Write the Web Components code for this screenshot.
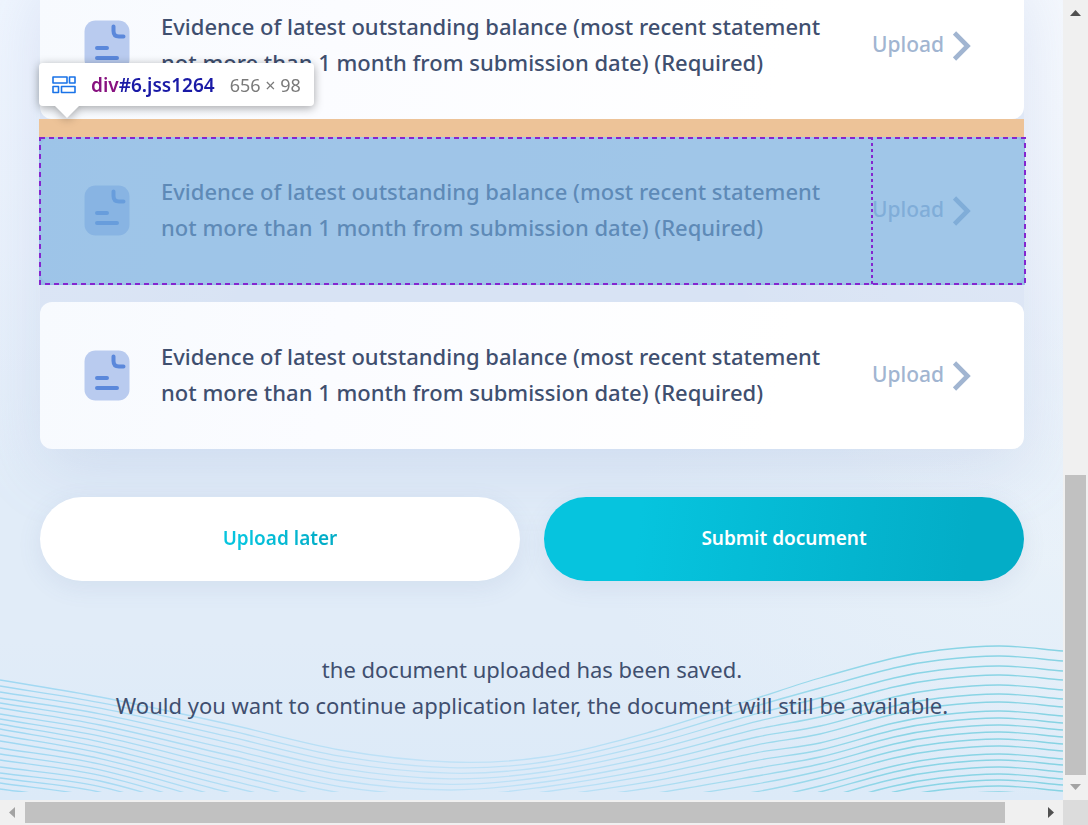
<!DOCTYPE html>
<html lang="en">
<head>
<meta charset="utf-8">
<meta name="viewport" content="width=device-width, initial-scale=1">
<title>Upload documents</title>
<style>
  html, body { margin: 0; height: 100%; }
  body { overflow: hidden; font-family: "Noto Sans", "Open Sans", sans-serif; color: #3f4f6f; }
</style>
</head>
<body>
<scroll-frame>
  <upload-page></upload-page>
</scroll-frame>

<script>
class BaseElement extends HTMLElement {
  connectedCallback() {
    if (this.shadowRoot) return;
    this.attachShadow({ mode: 'open' }).innerHTML = this.render();
    this.ready();
  }
  ready() {}
}

/* Viewport with classic scroll bars along the right and bottom edges */
customElements.define('scroll-frame', class extends BaseElement {
  render() {
    return `
    <style>
      :host { display: grid; grid-template: minmax(0, 1fr) 25px / minmax(0, 1fr) 25px; height: 100vh; background: #dcdcdc; }
      main { overflow: hidden; min-height: 0; }
    </style>
    <main><slot></slot></main>
    <scroll-bar axis="y" before="450" size="300" after="0"></scroll-bar>
    <scroll-bar axis="x" before="0" size="980" after="33"></scroll-bar>`;
  }
});

customElements.define('scroll-bar', class extends BaseElement {
  render() {
    const y = this.getAttribute('axis') === 'y';
    const a = n => this.getAttribute(n);
    const start = y ? 'M7 16 12.500 10 18 16Z' : 'M15 7 9 12.500 15 18Z';
    const end = y ? 'M7 9 18 9 12.500 15Z' : 'M10 7 16 12.500 10 18Z';
    return `
    <style>
      :host { display: flex; flex-direction: ${y ? 'column' : 'row'}; background: #f0f0f0; }
      svg { width: 25px; height: 25px; flex: none; }
      .before { flex: ${a('before')} 1 0; }
      .thumb { flex: ${a('size')} 1 0; background: #c1c1c1; margin: ${y ? '0 2px' : '2px 0'}; }
      .after { flex: ${a('after')} 1 0; }
    </style>
    <svg viewBox="0 0 25 25" aria-hidden="true"><path d="${start}" fill="${y ? '#505050' : '#a3a3a3'}"/></svg>
    <div class="before"></div><div class="thumb"></div><div class="after"></div>
    <svg viewBox="0 0 25 25" aria-hidden="true"><path d="${end}" fill="${y ? '#a3a3a3' : '#505050'}"/></svg>`;
  }
});

customElements.define('upload-page', class extends BaseElement {
  render() {
    return `
    <style>
      :host { display: block; position: relative; height: 100%; overflow: hidden; box-sizing: border-box;
        background:
          radial-gradient(ellipse 420px 560px at 104% 4%, #f6f9fe 0, transparent 100%),
          radial-gradient(ellipse 300px 500px at 0% 0%, #eff5fe 0, transparent 100%),
          radial-gradient(ellipse 460px 240px at 100% 70%, #e8f1f9 0, transparent 100%),
          linear-gradient(180deg, #e6eef9 0, #e1ecf8 60%, #e1ecf8 80%, #dceaf8 100%); }
      wave-lines { position: absolute; left: 0; right: 0; bottom: 8px; }
      .content { position: relative; margin-top: -28px; padding: 0 39px 0 40px; }
      .list { display: grid; gap: 18px; margin: 0; padding: 0; border-radius: 12px;
        box-shadow: 0 20px 64px rgba(130, 148, 205, .18); background: rgba(205, 217, 240, .5); }
      .actions { display: grid; grid-template-columns: 1fr 1fr; gap: 24px; margin-top: 48px; }
      p { margin: 70px 0 0; text-align: center; font-size: 22px; line-height: 36px; }
    </style>
    <wave-lines></wave-lines>
    <div class="content">
      <div class="list">
        <document-card></document-card>
        <document-card>
          <inspect-overlay slot="overlay"></inspect-overlay>
        </document-card>
        <document-card></document-card>
      </div>
      <div class="actions">
        <pill-button variant="plain">Upload later</pill-button>
        <pill-button variant="solid">Submit document</pill-button>
      </div>
      <p>the document uploaded has been saved.<br>Would you want to continue application later, the document will still be available.</p>
    </div>`;
  }
});

customElements.define('document-card', class extends BaseElement {
  render() {
    return `
    <style>
      :host { display: flex; position: relative; align-items: center; box-sizing: border-box; min-height: 147px; padding: 0 0 0 44px;
        border-radius: 12px; background: linear-gradient(100deg, #f7fafe 0, #fbfcff 30%, #ffffff 75%); }
      .icon { width: 46px; height: 51px; flex: none; margin-right: 31px; }
      h3 { flex: 1; min-width: 0; margin: 0; font-size: 22px; line-height: 36px; font-weight: 500; padding: 0 40px 4px 0; }
      button { display: flex; align-items: center; gap: 9px; flex: none; width: 152px; padding: 0; border: 0; background: none;
        font: 500 21px/32px "Noto Sans", sans-serif; color: #a1b5d1; text-align: left; }
      button span { padding-bottom: 4px; }
      button svg { width: 18px; height: 30px; }
    </style>
    <svg class="icon" viewBox="0 0 46 51" aria-hidden="true">
      <rect x=".5" y=".5" width="45" height="50" rx="11" fill="#b9cbef"/>
      <path d="M29.500 6.500V11Q29.500 16.500 35 16.500H39.500M13 28H23M13 38H33" fill="none" stroke="#5b88db" stroke-width="4" stroke-linecap="round"/>
    </svg>
    <h3>Evidence of latest outstanding balance (most recent statement not more than 1 month from submission date) (Required)</h3>
    <button type="button"><span>Upload</span>
      <svg viewBox="0 0 18 30" aria-hidden="true"><path d="M1.500 2 14.500 15 1.500 28" fill="none" stroke="#a1b5d1" stroke-width="4.600"/></svg>
    </button>
    <slot name="overlay"></slot>`;
  }
});

/* Element highlight: margin strip, content box, flex guides and the size label */
customElements.define('inspect-overlay', class extends BaseElement {
  render() {
    const blocks = [[1, 1, 14, 6], [17.5, 1, 5.5, 6], [1, 10.5, 5.5, 6], [9.5, 10.5, 13.5, 6]];
    const icon = blocks.map(([x, y, w, h]) => `<path d="M${x} ${y}h${w}v${h}h${-w}z"/>`).join('');
    return `
    <style>
      :host { position: absolute; inset: -18px -2px -1px -1px; display: grid; grid-template-rows: 18px 1fr; }
      .margin { background: #edc398; margin-right: 2px; }
      .box { position: relative; background: rgba(111, 168, 220, .66) content-box; padding-right: 1px; }
      .box svg { position: absolute; inset: 0; width: 100%; height: 100%; }
      .box .guide { left: auto; right: 153px; width: 2px; }
      rect, line { fill: none; stroke: #8426cf; stroke-width: 2; }
      rect { x: 1px; y: 1px; width: calc(100% - 2px); height: calc(100% - 2px); stroke-dasharray: 5 4; }
      line { stroke-dasharray: 3 3; }
      .tip { position: absolute; left: 0; top: -56px; display: flex; align-items: center; box-sizing: border-box; height: 43px; padding: 0 13px;
        border-radius: 4px; background: #fff; filter: drop-shadow(0 2px 5px rgba(0, 0, 0, .35)); font-size: 18px; line-height: 24px; white-space: nowrap; }
      .tip::after { content: ""; position: absolute; left: 16px; top: 100%; border: 12px solid transparent; border-top-color: #fff; border-bottom: 0; }
      .tip svg { width: 24px; height: 18px; margin-right: 15px; }
      b { font-weight: 600; font-size: 19px; color: #1a1aa6; margin-right: 15px; }
      b span { color: #881280; }
      .size { color: #7a7a7a; }
    </style>
    <div class="margin"></div>
    <div class="box">
      <svg aria-hidden="true"><rect/></svg>
      <svg class="guide" aria-hidden="true"><line x1="1" y1="0" x2="1" y2="100%"/></svg>
    </div>
    <div class="tip">
      <svg viewBox="0 0 24 18" fill="none" stroke="#1a73e8" stroke-width="1.600" stroke-linejoin="round" aria-hidden="true">${icon}</svg>
      <b><span>div</span>#6.jss1264</b><span class="size">656 × 98</span>
    </div>`;
  }
});

customElements.define('pill-button', class extends BaseElement {
  render() {
    const solid = this.getAttribute('variant') === 'solid';
    return `
    <style>
      :host { display: block; }
      button { display: block; width: 100%; height: 84px; border: 0; padding: 0 0 2px; border-radius: 42px; font: 600 19px/28px "Noto Sans", sans-serif;
        box-shadow: 0 6px 24px rgba(90, 110, 160, .1); color: #fff;
        background: ${solid ? 'linear-gradient(97deg, #06c4de 20%, #03adc7 88%)' : '#fff'}; }
      span { ${solid ? '' : 'background: linear-gradient(97deg, #06c4de 20%, #03adc7 88%); background-clip: text; -webkit-background-clip: text; color: transparent;'} }
    </style>
    <button type="button"><span><slot></slot></span></button>`;
  }
});

/* Decorative contour lines, each a smooth curve through the sampled heights */
customElements.define('wave-lines', class extends BaseElement {
  render() {
    return `
    <style>:host { display: block; height: 154px; } svg { display: block; width: 100%; height: 100%; }</style>
    <svg viewBox="0 637 1063 154" preserveAspectRatio="none" aria-hidden="true">
      <defs><linearGradient id="ink" gradientUnits="userSpaceOnUse" x1="0" y1="0" x2="1063" y2="0">
        <stop offset="0" stop-color="#9fd8f2"/><stop offset=".4" stop-color="#c1e2f7"/>
        <stop offset=".55" stop-color="#b9e0f6"/><stop offset=".85" stop-color="#8bd5e6"/><stop offset="1" stop-color="#87d3e3"/>
      </linearGradient></defs>
      <g fill="none" stroke="url(#ink)" stroke-width="1.300"></g>
    </svg>`;
  }
  ready() {
    const left = [679, 685, 691, 697, 702, 707, 713, 718, 723, 728, 734, 740, 747, 753, 759, 766, 772, 777, 782, 788];
    const peak = [645, 655, 665, 674, 684, 693, 701, 710, 717, 724, 731, 738, 745, 753, 759, 766, 773, 779, 785, 791];
    const mid = [[100, 696, 5.6], [228, 723, 6.2], [340, 749, 6.1], [450, 761, 5.6], [544, 756, 5], [650, 731, 6.2], [757, 697, 7.8]];
    const crest = [[820, 32], [894, 12], [940, 4], [1000, 0], [1063, 5]];
    this.shadowRoot.querySelector('g').innerHTML = left.map((y, i) => {
      const p = [[0, y], ...mid.map(([x, base, step]) => [x, base + step * i]), ...crest.map(([x, drop]) => [x, peak[i] + drop])];
      const slope = p.map((_, k) => {
        const a = p[Math.max(k - 1, 0)], b = p[Math.min(k + 1, p.length - 1)];
        return (b[1] - a[1]) / (b[0] - a[0]);
      });
      let d = `M${p[0]}`;
      for (let k = 1; k < p.length; k++) {
        const [x0, y0] = p[k - 1], [x1, y1] = p[k], h = (x1 - x0) / 3;
        d += `C${x0 + h} ${y0 + slope[k - 1] * h} ${x1 - h} ${y1 - slope[k] * h} ${x1} ${y1}`;
      }
      return `<path d="${d}"/>`;
    }).join('');
  }
});
</script>
</body>
</html>
